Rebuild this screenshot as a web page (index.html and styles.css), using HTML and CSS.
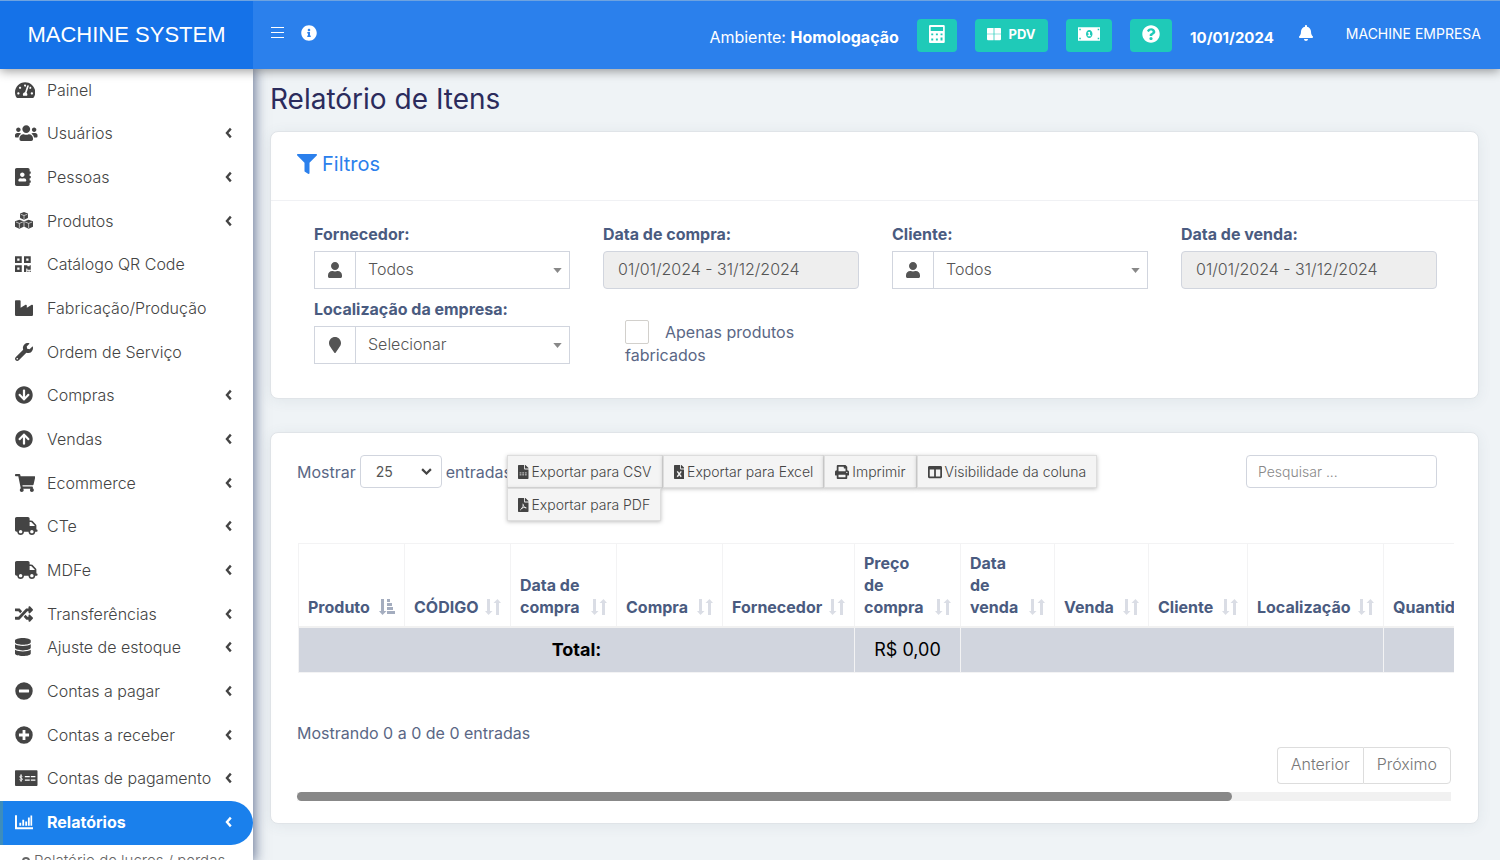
FILE: index.html
```html
<!DOCTYPE html>
<html lang="pt-BR">
<head>
<meta charset="utf-8">
<meta name="viewport" content="width=device-width, initial-scale=1">
<title>Relatório de Itens</title>
<link rel="stylesheet" href="styles.css">
</head>
<body>
<svg class="sprite" aria-hidden="true">
  <defs>
    <path id="i-gauge" d="M288 32C128.94 32 0 160.94 0 320c0 52.8 14.25 102.26 39.06 144.8 5.61 9.62 16.3 15.2 27.44 15.2h443c11.14 0 21.83-5.58 27.44-15.2C561.75 422.26 576 372.8 576 320c0-159.06-128.94-288-288-288zm0 64c14.71 0 26.58 10.13 30.32 23.65-1.11 2.26-2.64 4.23-3.45 6.67l-9.22 27.67c-5.13 3.49-10.97 6.01-17.64 6.01-17.67 0-32-14.33-32-32S270.33 96 288 96zM96 384c-17.67 0-32-14.33-32-32s14.33-32 32-32 32 14.33 32 32-14.33 32-32 32zm48-160c-17.67 0-32-14.33-32-32s14.33-32 32-32 32 14.33 32 32-14.33 32-32 32zm246.77-72.41l-61.33 184C343.13 347.33 352 364.54 352 384c0 11.72-3.38 22.55-8.88 32H232.88c-5.5-9.45-8.88-20.28-8.88-32 0-33.94 26.5-61.43 59.9-63.59l61.34-184.01c4.17-12.56 17.73-19.45 30.36-15.17 12.57 4.19 19.35 17.79 15.17 30.36zm14.66 57.2l15.52-46.55c3.47-1.29 7.13-2.23 11.05-2.23 17.67 0 32 14.33 32 32s-14.33 32-32 32c-11.38-.01-21.25-6.1-26.57-15.22zM480 384c-17.67 0-32-14.33-32-32s14.33-32 32-32 32 14.33 32 32-14.33 32-32 32z"/>
    <path id="i-users" d="M96 224c35.3 0 64-28.7 64-64s-28.7-64-64-64-64 28.7-64 64 28.7 64 64 64zm448 0c35.3 0 64-28.7 64-64s-28.7-64-64-64-64 28.7-64 64 28.7 64 64 64zm32 32h-64c-17.6 0-33.5 7.1-45.1 18.6 40.3 22.1 68.9 62 75.1 109.4h66c17.7 0 32-14.3 32-32v-32c0-35.3-28.7-64-64-64zm-256 0c61.9 0 112-50.1 112-112S381.9 32 320 32 208 82.1 208 144s50.1 112 112 112zm76.8 32h-8.3c-20.8 10-43.9 16-68.5 16s-47.6-6-68.5-16h-8.3C179.6 288 128 339.6 128 403.2V432c0 26.5 21.5 48 48 48h288c26.5 0 48-21.5 48-48v-28.8c0-63.6-51.6-115.2-115.2-115.2zm-223.7-13.4C161.5 263.1 145.6 256 128 256H64c-35.3 0-64 28.7-64 64v32c0 17.7 14.3 32 32 32h65.9c6.3-47.4 34.9-87.3 75.2-109.4z"/>
    <path id="i-book" d="M436 160c6.6 0 12-5.4 12-12v-40c0-6.6-5.4-12-12-12h-20V48c0-26.5-21.5-48-48-48H48C21.5 0 0 21.5 0 48v416c0 26.5 21.5 48 48 48h320c26.5 0 48-21.5 48-48v-48h20c6.6 0 12-5.4 12-12v-40c0-6.6-5.4-12-12-12h-20v-64h20c6.6 0 12-5.4 12-12v-40c0-6.6-5.4-12-12-12h-20v-64h20zm-228-32c35.3 0 64 28.7 64 64s-28.7 64-64 64-64-28.7-64-64 28.7-64 64-64zm112 236.8c0 10.6-10 19.2-22.4 19.2H118.4C106 384 96 375.4 96 364.8v-19.2c0-31.8 30.1-57.6 67.2-57.6h5c12.3 5.1 25.7 8 39.8 8s27.6-2.9 39.8-8h5c37.1 0 67.2 25.8 67.2 57.6v19.2z"/>
    <g id="i-cubes">
      <path d="M256 0l112 44v130l-112 48-112-48V44zM124 218l122 48v152l-122 60L0 418V266zM388 218l124 48v152l-124 60-122-60V266z"/>
      <path d="M164 66l92 34 92-34M256 100v100M24 284l100 40 100-40M124 324v130M288 284l100 40 100-40M388 324v130" fill="none" stroke="#fff" stroke-width="18"/>
    </g>
    <path id="i-qr" d="M0 224h192V32H0v192zM64 96h64v64H64V96zm192-64v192h192V32H256zm128 128h-64V96h64v64zM0 480h192V288H0v192zm64-128h64v64H64v-64zm352-64h32v128h-96v-32h-32v96h-64V288h96v32h64v-32zm0 160h32v32h-32v-32zm-64 0h32v32h-32v-32z"/>
    <path id="i-industry" d="M475.115 163.781L336 252.309v-68.28c0-18.916-20.931-30.399-36.885-20.248L160 252.309V56c0-13.255-10.745-24-24-24H24C10.745 32 0 42.745 0 56v400c0 13.255 10.745 24 24 24h464c13.255 0 24-10.745 24-24V184.029c0-18.917-20.931-30.399-36.885-20.248z"/>
    <path id="i-wrench" d="M507.73 109.1c-2.24-9.03-13.54-12.09-20.12-5.51l-74.36 74.36-67.88-11.31-11.31-67.88 74.36-74.36c6.62-6.62 3.43-17.9-5.66-20.16-47.38-11.74-99.55.91-136.58 37.93-39.64 39.64-50.55 97.1-34.05 147.2L18.74 402.76c-24.99 24.99-24.99 65.51 0 90.5 24.99 24.99 65.51 24.99 90.5 0l213.21-213.21c50.12 16.71 107.47 5.68 147.37-34.22 37.07-37.07 49.7-89.32 37.91-136.73zM64 472c-13.25 0-24-10.75-24-24 0-13.26 10.75-24 24-24s24 10.74 24 24c0 13.25-10.75 24-24 24z"/>
    <path id="i-down" d="M504 256c0 137-111 248-248 248S8 393 8 256 119 8 256 8s248 111 248 248zm-143.6-28.9L288 302.6V120c0-13.3-10.7-24-24-24h-16c-13.3 0-24 10.7-24 24v182.6l-72.4-75.5c-9.3-9.7-24.8-9.9-34.3-.4l-10.9 11c-9.4 9.4-9.4 24.6 0 33.9L239 404.3c9.4 9.4 24.6 9.4 33.9 0l132.7-132.7c9.4-9.4 9.4-24.6 0-33.9l-10.9-11c-9.5-9.5-25-9.3-34.3.4z"/>
    <path id="i-cart" d="M528.12 301.319l47.273-208C578.806 78.301 567.391 64 551.99 64H159.208l-9.166-44.81C147.758 8.021 137.93 0 126.529 0H24C10.745 0 0 10.745 0 24v16c0 13.255 10.745 24 24 24h69.883l70.248 343.435C147.325 417.1 136 435.222 136 456c0 30.928 25.072 56 56 56s56-25.072 56-56c0-15.674-6.447-29.835-16.824-40h209.647C430.447 426.165 424 440.326 424 456c0 30.928 25.072 56 56 56s56-25.072 56-56c0-22.172-12.888-41.332-31.579-50.405l5.517-24.276c3.413-15.018-8.002-29.319-23.403-29.319H218.117l-6.545-32h293.145c11.206 0 20.92-7.754 23.403-18.681z"/>
    <path id="i-truck" d="M624 352h-16V243.9c0-12.7-5.1-24.9-14.1-33.9L494 110.1c-9-9-21.2-14.1-33.9-14.1H416V48c0-26.5-21.5-48-48-48H48C21.5 0 0 21.5 0 48v320c0 26.5 21.5 48 48 48h16c0 53 43 96 96 96s96-43 96-96h128c0 53 43 96 96 96s96-43 96-96h48c8.8 0 16-7.2 16-16v-32c0-8.8-7.2-16-16-16zM160 464c-26.5 0-48-21.5-48-48s21.5-48 48-48 48 21.5 48 48-21.5 48-48 48zm320 0c-26.5 0-48-21.5-48-48s21.5-48 48-48 48 21.5 48 48-21.5 48-48 48zm80-208H416V144h44.1l99.9 99.9V256z"/>
    <path id="i-random" d="M504.971 359.029c9.373 9.373 9.373 24.569 0 33.941l-80 79.984c-15.01 15.01-40.971 4.49-40.971-16.971V416h-58.785a12.004 12.004 0 0 1-8.773-3.812l-70.556-75.596 53.333-57.143L352 336h32v-39.981c0-21.438 25.943-31.998 40.971-16.971l80 79.981zM12 176h84l52.781 56.551 53.333-57.143-70.556-75.596A11.999 11.999 0 0 0 122.785 96H12c-6.627 0-12 5.373-12 12v56c0 6.627 5.373 12 12 12zm372 0v39.984c0 21.46 25.961 31.98 40.971 16.971l80-79.984c9.373-9.373 9.373-24.569 0-33.941l-80-79.981C409.943 24.021 384 34.582 384 56.019V96h-58.785a12.004 12.004 0 0 0-8.773 3.812L96 336H12c-6.627 0-12 5.373-12 12v56c0 6.627 5.373 12 12 12h110.785c3.326 0 6.503-1.381 8.773-3.812L352 176h32z"/>
    <path id="i-db" d="M448 73.143v45.714C448 159.143 347.667 192 224 192S0 159.143 0 118.857V73.143C0 32.857 100.333 0 224 0s224 32.857 224 73.143zM448 176v102.857C448 319.143 347.667 352 224 352S0 319.143 0 278.857V176c48.125 33.143 136.208 48.572 224 48.572S399.874 209.143 448 176zm0 160v102.857C448 479.143 347.667 512 224 512S0 479.143 0 438.857V336c48.125 33.143 136.208 48.572 224 48.572S399.874 369.143 448 336z"/>
    <path id="i-minus" fill-rule="evenodd" d="M256 8a248 248 0 1 0 0 496 248 248 0 0 0 0-496zM124 216h264a12 12 0 0 1 12 12v56a12 12 0 0 1-12 12H124a12 12 0 0 1-12-12v-56a12 12 0 0 1 12-12z"/>
    <path id="i-plus" fill-rule="evenodd" d="M256 8a248 248 0 1 0 0 496 248 248 0 0 0 0-496zM216 112h80v104h104v80H296v104h-80V296H112v-80h104z"/>
    <g id="i-check">
      <path fill-rule="evenodd" d="M24 32h592a24 24 0 0 1 24 24v400a24 24 0 0 1-24 24H24a24 24 0 0 1-24-24V56a24 24 0 0 1 24-24zM280 200v38h140v-38zM450 200v38h130v-38zM280 296v38h140v-38zM450 296v38h130v-38z"/>
      <path d="M208 212c-14-18-72-22-72 12 0 40 74 24 74 66 0 38-60 36-80 14M172 150v214" fill="none" stroke="#fff" stroke-width="28"/>
    </g>
    <path id="i-chart" d="M0 64h56v344h456v56H0zM124 280h52v84h-52zM208 190h52v174h-52zM292 240h52v124h-52zM368 130h52v234h-52zM440 72h48v292h-48z"/>
    <path id="i-angle" d="M212 96L72 256l140 160" fill="none" stroke="currentColor" stroke-width="86"/>
    <path id="i-filter" d="M487.976 0H24.028C2.71 0-8.047 25.866 7.058 40.971L192 225.941V432c0 7.831 3.821 15.17 10.237 19.662l80 55.98C298.02 518.69 320 507.493 320 487.98V225.941l184.947-184.97C520.021 25.896 509.338 0 487.976 0z"/>
    <path id="i-user" d="M224 256c70.7 0 128-57.3 128-128S294.7 0 224 0 96 57.3 96 128s57.3 128 128 128zm89.6 32h-16.7c-22.2 10.2-46.9 16-72.9 16s-50.6-5.8-72.9-16h-16.7C60.2 288 0 348.2 0 422.4V464c0 26.5 21.5 48 48 48h352c26.5 0 48-21.5 48-48v-41.6c0-74.2-60.2-134.4-134.4-134.4z"/>
    <path id="i-pin" d="M172.268 501.67C26.97 291.031 0 269.413 0 192 0 85.961 85.961 0 192 0s192 85.961 192 192c0 77.413-26.97 99.031-172.268 309.67-9.535 13.774-29.93 13.773-39.464 0z"/>
    <path id="i-info" d="M256 8C119.043 8 8 119.083 8 256c0 136.997 111.043 248 248 248s248-111.003 248-248C504 119.083 392.957 8 256 8zm0 110c23.196 0 42 18.804 42 42s-18.804 42-42 42-42-18.804-42-42 18.804-42 42-42zm56 254c0 6.627-5.373 12-12 12h-88c-6.627 0-12-5.373-12-12v-24c0-6.627 5.373-12 12-12h12v-64h-12c-6.627 0-12-5.373-12-12v-24c0-6.627 5.373-12 12-12h64c6.627 0 12 5.373 12 12v100h12c6.627 0 12 5.373 12 12v24z"/>
    <path id="i-help" d="M504 256c0 136.997-111.043 248-248 248S8 392.997 8 256C8 119.083 119.043 8 256 8s248 111.083 248 248zM262.655 90c-54.497 0-89.255 22.957-116.549 63.758-3.536 5.286-2.353 12.415 2.715 16.258l34.699 26.31c5.205 3.947 12.621 3.008 16.665-2.122 17.864-22.658 30.113-35.797 57.303-35.797 20.429 0 45.698 13.148 45.698 32.958 0 14.976-12.363 22.667-32.534 33.976C247.128 238.528 216 254.941 216 296v4c0 6.627 5.373 12 12 12h56c6.627 0 12-5.373 12-12v-1.333c0-28.462 83.186-29.647 83.186-106.667 0-58.002-60.165-102-116.531-102zM256 338c-25.365 0-46 20.635-46 46 0 25.364 20.635 46 46 46s46-20.636 46-46c0-25.365-20.635-46-46-46z"/>
    <path id="i-bell" d="M224 512c35.32 0 63.97-28.65 63.97-64H160.03c0 35.35 28.65 64 63.97 64zm215.39-149.71c-19.32-20.76-55.47-51.99-55.47-154.29 0-77.7-54.48-139.9-127.94-155.16V32c0-17.67-14.32-32-31.98-32s-31.98 14.33-31.98 32v20.84C118.56 68.1 64.08 130.3 64.08 208c0 102.3-36.15 133.53-55.47 154.29-6 6.45-8.66 14.16-8.61 21.71.11 16.4 12.98 32 32.1 32h383.8c19.12 0 32-15.6 32.1-32 .05-7.55-2.61-15.27-8.61-21.71z"/>
    <path id="i-calc" fill-rule="evenodd" d="M32 0h384a32 32 0 0 1 32 32v448a32 32 0 0 1-32 32H32a32 32 0 0 1-32-32V32A32 32 0 0 1 32 0zM48 56v112h352V56zM64 244v48h56v-48zM196 244v48h56v-48zM328 244v48h56v-48zM64 384v56h56v-56zM196 384v56h56v-56zM328 352v88h56v-88z"/>
    <path id="i-tiles" d="M30 32h212v212H0V62a30 30 0 0 1 30-30zM270 32h212a30 30 0 0 1 30 30v182H270zM0 268h242v212H30a30 30 0 0 1-30-30zM270 268h242v182a30 30 0 0 1-30 30H270z"/>
    <path id="i-bill" fill-rule="evenodd" d="M0 64h640v384H0zM36 104v44h44v-44zM560 104v44h44v-44zM36 364v44h44v-44zM560 364v44h44v-44zM320 144c-53 0-92 50-92 112s39 112 92 112 92-50 92-112-39-112-92-112zM298 196h44v90h20v32h-84v-32h22v-50h-22v-24z"/>
    <path id="i-print" d="M448 192V77.25c0-8.49-3.37-16.62-9.37-22.63L393.37 9.37c-6-6-14.14-9.37-22.63-9.37H96C78.33 0 64 14.33 64 32v160c-35.35 0-64 28.65-64 64v112c0 8.84 7.16 16 16 16h48v96c0 17.67 14.33 32 32 32h320c17.67 0 32-14.33 32-32v-96h48c8.84 0 16-7.16 16-16V256c0-35.35-28.65-64-64-64zm-64 256H128v-96h256v96zm0-224H128V64h192v48c0 8.84 7.16 16 16 16h48v96zm48 72c-13.25 0-24-10.75-24-24 0-13.26 10.75-24 24-24s24 10.74 24 24c0 13.25-10.75 24-24 24z"/>
    <path id="i-cols" d="M464 32H48C21.49 32 0 53.49 0 80v352c0 26.51 21.49 48 48 48h416c26.51 0 48-21.49 48-48V80c0-26.51-21.49-48-48-48zM224 416H64V160h160v256zm224 0H288V160h160v256z"/>
    <path id="i-file" d="M224 136V0H24C10.7 0 0 10.7 0 24v464c0 13.3 10.7 24 24 24h336c13.3 0 24-10.7 24-24V160H248c-13.2 0-24-10.8-24-24zM384 122v6H256V0h6c6.4 0 12.5 2.5 17 7l98 98c4.5 4.5 7 10.6 7 17z"/>
    <path id="i-sort" d="M2 0h3v12h2.500L3.500 16 0 12h2zM11 16V4H8.500L12.500 0 16 4h-2v12z"/>
    <path id="i-sorted" d="M2 0h3v12h2.500L3.500 16 0 12h2zM8 0h3v3H8zM8 4h5v3H8zM8 8h6v3H8zM8 12h8v3H8z"/>
  </defs>
</svg>

<div class="app">
  <header class="topbar">
    <a class="brand" href="#">MACHINE SYSTEM</a>
    <nav class="topnav" aria-label="Barra superior">
      <button class="plain" type="button" aria-label="Menu">
        <svg class="burger" viewBox="0 0 13 12"><path d="M0 .5h13M0 5.500h13M0 10.500h13" stroke="#fff" fill="none"/></svg>
      </button>
      <button class="plain" type="button" aria-label="Informações"><svg class="icon i16" viewBox="0 0 512 512"><use href="#i-info"/></svg></button>
      <div class="tools">
        <span class="env">Ambiente: <strong>Homologação</strong></span>
        <button class="tool" type="button" aria-label="Calculadora"><svg class="icon i18" viewBox="0 0 448 512"><use href="#i-calc"/></svg></button>
        <button class="tool" type="button"><svg class="icon i14" viewBox="0 0 512 512"><use href="#i-tiles"/></svg>PDV</button>
        <button class="tool" type="button" aria-label="Caixa"><svg class="icon i18" viewBox="0 0 640 512"><use href="#i-bill"/></svg></button>
        <button class="tool" type="button" aria-label="Ajuda"><svg class="icon i18" viewBox="0 0 512 512"><use href="#i-help"/></svg></button>
        <strong class="date">10/01/2024</strong>
      </div>
      <button class="plain bell" type="button" aria-label="Notificações"><svg class="icon i16" viewBox="0 0 448 512"><use href="#i-bell"/></svg></button>
      <a class="company" href="#">MACHINE EMPRESA</a>
    </nav>
  </header>

  <aside class="sidebar">
    <ul class="menu">
      <li><a href="#"><svg class="icon i18" viewBox="0 0 576 512"><use href="#i-gauge"/></svg><span>Painel</span></a></li>
      <li><a href="#"><svg class="icon i18" viewBox="0 0 640 512"><use href="#i-users"/></svg><span>Usuários</span><svg class="icon angle" viewBox="0 0 256 512"><use href="#i-angle"/></svg></a></li>
      <li><a href="#"><svg class="icon i18" viewBox="0 0 448 512"><use href="#i-book"/></svg><span>Pessoas</span><svg class="icon angle" viewBox="0 0 256 512"><use href="#i-angle"/></svg></a></li>
      <li><a href="#"><svg class="icon i18" viewBox="0 0 512 512"><use href="#i-cubes"/></svg><span>Produtos</span><svg class="icon angle" viewBox="0 0 256 512"><use href="#i-angle"/></svg></a></li>
      <li><a href="#"><svg class="icon i18" viewBox="0 0 448 512"><use href="#i-qr"/></svg><span>Catálogo QR Code</span></a></li>
      <li><a href="#"><svg class="icon i18" viewBox="0 0 512 512"><use href="#i-industry"/></svg><span>Fabricação/Produção</span></a></li>
      <li><a href="#"><svg class="icon i18" viewBox="0 0 512 512"><use href="#i-wrench"/></svg><span>Ordem de Serviço</span></a></li>
      <li><a href="#"><svg class="icon i18" viewBox="0 0 512 512"><use href="#i-down"/></svg><span>Compras</span><svg class="icon angle" viewBox="0 0 256 512"><use href="#i-angle"/></svg></a></li>
      <li><a href="#"><svg class="icon i18" viewBox="0 0 512 512"><use href="#i-down" transform="rotate(180 256 256)"/></svg><span>Vendas</span><svg class="icon angle" viewBox="0 0 256 512"><use href="#i-angle"/></svg></a></li>
      <li><a href="#"><svg class="icon i18" viewBox="0 0 576 512"><use href="#i-cart"/></svg><span>Ecommerce</span><svg class="icon angle" viewBox="0 0 256 512"><use href="#i-angle"/></svg></a></li>
      <li><a href="#"><svg class="icon i18" viewBox="0 0 640 512"><use href="#i-truck"/></svg><span>CTe</span><svg class="icon angle" viewBox="0 0 256 512"><use href="#i-angle"/></svg></a></li>
      <li><a href="#"><svg class="icon i18" viewBox="0 0 640 512"><use href="#i-truck"/></svg><span>MDFe</span><svg class="icon angle" viewBox="0 0 256 512"><use href="#i-angle"/></svg></a></li>
      <li><a href="#"><svg class="icon i18" viewBox="0 0 512 512"><use href="#i-random"/></svg><span>Transferências</span><svg class="icon angle" viewBox="0 0 256 512"><use href="#i-angle"/></svg></a></li>
    </ul>
    <ul class="menu menu-more">
      <li><a href="#"><svg class="icon i18" viewBox="0 0 448 512"><use href="#i-db"/></svg><span>Ajuste de estoque</span><svg class="icon angle" viewBox="0 0 256 512"><use href="#i-angle"/></svg></a></li>
      <li><a href="#"><svg class="icon i18" viewBox="0 0 512 512"><use href="#i-minus"/></svg><span>Contas a pagar</span><svg class="icon angle" viewBox="0 0 256 512"><use href="#i-angle"/></svg></a></li>
      <li><a href="#"><svg class="icon i18" viewBox="0 0 512 512"><use href="#i-plus"/></svg><span>Contas a receber</span><svg class="icon angle" viewBox="0 0 256 512"><use href="#i-angle"/></svg></a></li>
      <li><a href="#"><svg class="icon i18" viewBox="0 0 640 512"><use href="#i-check"/></svg><span>Contas de pagamento</span><svg class="icon angle" viewBox="0 0 256 512"><use href="#i-angle"/></svg></a></li>
      <li><a class="active" href="#"><svg class="icon i18" viewBox="0 0 512 512"><use href="#i-chart"/></svg><span>Relatórios</span><svg class="icon angle" viewBox="0 0 256 512"><use href="#i-angle"/></svg></a></li>
    </ul>
    <a class="submenu" href="#"><svg class="ring" viewBox="0 0 8 8"><circle cx="4" cy="4" r="3" fill="none" stroke="currentColor" stroke-width="2"/></svg>Relatório de lucros / perdas</a>
  </aside>

  <main class="content">
    <h1 class="title">Relatório de Itens</h1>

    <section class="card">
      <h2 class="card-head"><svg class="icon i20" viewBox="0 0 512 512"><use href="#i-filter"/></svg>Filtros</h2>
      <form class="filters">
        <div class="field">
          <label for="fornecedor">Fornecedor:</label>
          <div class="group">
            <span class="addon"><svg class="icon i16" viewBox="0 0 448 512"><use href="#i-user"/></svg></span>
            <select id="fornecedor"><option>Todos</option></select>
            <svg class="caret" viewBox="0 0 10 6"><path d="M0 0h10L5 6z"/></svg>
          </div>
        </div>
        <div class="field">
          <label for="compra">Data de compra:</label>
          <input class="date-range" id="compra" type="text" value="01/01/2024 - 31/12/2024" readonly>
        </div>
        <div class="field">
          <label for="cliente">Cliente:</label>
          <div class="group">
            <span class="addon"><svg class="icon i16" viewBox="0 0 448 512"><use href="#i-user"/></svg></span>
            <select id="cliente"><option>Todos</option></select>
            <svg class="caret" viewBox="0 0 10 6"><path d="M0 0h10L5 6z"/></svg>
          </div>
        </div>
        <div class="field">
          <label for="venda">Data de venda:</label>
          <input class="date-range" id="venda" type="text" value="01/01/2024 - 31/12/2024" readonly>
        </div>
        <div class="field">
          <label for="local">Localização da empresa:</label>
          <div class="group">
            <span class="addon"><svg class="icon i16" viewBox="0 0 384 512"><use href="#i-pin"/></svg></span>
            <select id="local"><option>Selecionar</option></select>
            <svg class="caret" viewBox="0 0 10 6"><path d="M0 0h10L5 6z"/></svg>
          </div>
        </div>
        <label class="check"><input type="checkbox">Apenas produtos fabricados</label>
      </form>
    </section>

    <section class="card report">
      <div class="toolbar">
        <label class="length">Mostrar
          <span class="length-box"><select><option>25</option></select><svg class="chev" viewBox="0 0 10 6"><path d="M1 1l4 4 4-4" fill="none" stroke="currentColor" stroke-width="2"/></svg></span>
          entradas</label>
        <div class="exports">
          <button type="button"><svg class="icon i14" viewBox="0 0 384 512"><use href="#i-file"/><path d="M60 290h264M60 360h264" stroke="#f4f4f4" stroke-width="30" stroke-dasharray="66 30"/></svg>Exportar para CSV</button>
          <button type="button"><svg class="icon i14" viewBox="0 0 384 512"><use href="#i-file"/><path d="M120 230l144 200M264 230L120 430" stroke="#f4f4f4" stroke-width="50"/></svg>Exportar para Excel</button>
          <button type="button"><svg class="icon i14" viewBox="0 0 512 512"><use href="#i-print"/></svg>Imprimir</button>
          <button type="button"><svg class="icon i14" viewBox="0 0 512 512"><use href="#i-cols"/></svg>Visibilidade da coluna</button>
          <button type="button"><svg class="icon i14" viewBox="0 0 384 512"><use href="#i-file"/><path d="M176 210c30 90 50 150 130 160M190 250c0 80-50 150-110 190M110 390c60-40 110-50 190-40" fill="none" stroke="#f4f4f4" stroke-width="32"/></svg>Exportar para PDF</button>
        </div>
        <input class="search" type="search" placeholder="Pesquisar ..." aria-label="Pesquisar">
      </div>

      <div class="table-wrap">
        <table class="table">
          <colgroup>
            <col class="w106"><col class="w106"><col class="w106"><col class="w106"><col class="w132"><col class="w106"><col class="w94"><col class="w94"><col class="w100"><col class="w136"><col class="w132">
          </colgroup>
          <thead>
            <tr>
              <th scope="col"><span class="th">Produto <svg class="sort on" viewBox="0 0 16 16"><use href="#i-sorted"/></svg></span></th>
              <th scope="col"><span class="th">CÓDIGO <svg class="sort" viewBox="0 0 16 16"><use href="#i-sort"/></svg></span></th>
              <th scope="col"><span class="th">Data de compra <svg class="sort" viewBox="0 0 16 16"><use href="#i-sort"/></svg></span></th>
              <th scope="col"><span class="th">Compra <svg class="sort" viewBox="0 0 16 16"><use href="#i-sort"/></svg></span></th>
              <th scope="col"><span class="th">Fornecedor <svg class="sort" viewBox="0 0 16 16"><use href="#i-sort"/></svg></span></th>
              <th scope="col"><span class="th">Preço<br>de<br>compra <svg class="sort" viewBox="0 0 16 16"><use href="#i-sort"/></svg></span></th>
              <th scope="col"><span class="th">Data<br>de<br>venda <svg class="sort" viewBox="0 0 16 16"><use href="#i-sort"/></svg></span></th>
              <th scope="col"><span class="th">Venda <svg class="sort" viewBox="0 0 16 16"><use href="#i-sort"/></svg></span></th>
              <th scope="col"><span class="th">Cliente <svg class="sort" viewBox="0 0 16 16"><use href="#i-sort"/></svg></span></th>
              <th scope="col"><span class="th">Localização <svg class="sort" viewBox="0 0 16 16"><use href="#i-sort"/></svg></span></th>
              <th scope="col"><span class="th">Quantidade <svg class="sort" viewBox="0 0 16 16"><use href="#i-sort"/></svg></span></th>
            </tr>
          </thead>
          <tfoot>
            <tr><td colspan="5"><strong>Total:</strong></td><td>R$ 0,00</td><td colspan="4"></td><td></td></tr>
          </tfoot>
        </table>
      </div>

      <p class="info">Mostrando 0 a 0 de 0 entradas</p>
      <div class="pager">
        <button type="button">Anterior</button>
        <button type="button">Próximo</button>
      </div>
      <div class="scroll"><div class="thumb"></div></div>
    </section>
  </main>
</div>
</body>
</html>
```
FILE: styles.css
```css
* { box-sizing: border-box; }

body {
  margin: 0;
  font-family: Inter, "Open Sans", sans-serif;
  font-size: 16px;
  color: #5a6785;
  background: #eff3f6;
}

button, input, select { font: inherit; color: inherit; margin: 0; }
button { cursor: pointer; }
a { color: inherit; text-decoration: none; }

.sprite { position: absolute; width: 0; height: 0; }
.icon { fill: currentColor; width: auto; flex: none; display: block; }
.i14 { height: 14px; }
.i16 { height: 16px; }
.i18 { height: 18px; }
.i20 { height: 20px; }

.app {
  display: grid;
  grid-template-columns: 253px minmax(0, 1fr);
  grid-template-rows: auto minmax(0, 1fr);
  height: 100vh;
  overflow: hidden;
}

/* top bar */
.topbar {
  grid-column: 1 / -1;
  display: flex;
  height: 69px;
  color: #fff;
  background: #2b80ec;
  border-top: 1px solid #6ea3e0;
  box-shadow: 0 2px 10px rgba(0, 0, 0, .4);
  z-index: 3;
}
.brand {
  width: 253px;
  display: flex;
  align-items: center;
  justify-content: center;
  background: #1572e8;
  font-family: "Liberation Sans", Arial, sans-serif;
  font-size: 22px;
}
.topnav { flex: 1; display: flex; align-items: center; padding: 0 19px 4px 18px; gap: 17px; }
.plain { display: block; padding: 0; border: 0; background: none; color: #fff; }
.burger { display: block; width: 13px; height: 12px; }
.tools { margin-left: auto; display: flex; align-items: center; gap: 18px; padding-top: 4px; }
.env, .date { padding-top: 4px; }
.date { font-size: 15px; }
.tool {
  display: flex;
  align-items: center;
  gap: 8px;
  height: 33px;
  padding: 0 12px 2px;
  border: 0;
  border-radius: 4px;
  background: #1fcab8;
  color: #fff;
  font-size: 13px;
  font-weight: 700;
}
.bell { margin: 0 16px 0 8px; }
.company { font-size: 14px; }

/* sidebar */
.sidebar { background: #fff; color: #444; overflow: hidden; box-shadow: 0 0 12px 2px rgba(50, 68, 110, .7); z-index: 2; }
.menu { list-style: none; margin: 0; padding: 0; font-weight: 300; }
.menu a { display: grid; grid-template-columns: 32px 1fr auto; align-items: center; height: 44px; padding: 0 21px 2px 15px; white-space: nowrap; }
.menu li:nth-child(3n+1) a { height: 43px; }
.menu-more { margin-top: -10px; }
.menu-more li:nth-child(3n+1) a { height: 44px; }
.menu-more li:nth-child(3n) a { height: 43px; }
.angle { height: 14px; }
.menu a.active {
  padding-left: 12px;
  border-left: 3px solid #3c8dbc;
  border-radius: 0 22px 22px 0;
  background: #1a80ec;
  color: #fff;
  font-weight: 700;
}
.submenu { display: flex; align-items: center; gap: 4px; padding: 6px 0 0 22px; font-size: 15px; font-weight: 300; color: #666; white-space: nowrap; }
.ring { width: 8px; height: 8px; }

/* content */
.content { overflow: hidden; padding: 12px 21px 0 17px; }
.title { margin: 0 0 13px; font-size: 28px; line-height: 37px; font-weight: 400; color: #2b2b5c; }
.card {
  background: #fff;
  border: 1px solid #e0e4e8;
  border-radius: 8px;
  box-shadow: 0 2px 14px rgba(69, 90, 100, .08);
}
.card-head {
  display: flex;
  align-items: center;
  gap: 5px;
  margin: 0;
  padding: 18px 26px 22px;
  border-bottom: 1px solid #f0f1f4;
  font-size: 20px;
  line-height: 28px;
  font-weight: 400;
  color: #2b80ec;
}
.filters { display: grid; grid-template-columns: repeat(4, minmax(0, 1fr)); gap: 9px 33px; padding: 22px 41px 31px 43px; }
.field label { display: block; line-height: 22px; margin-bottom: 6px; font-weight: 700; color: #4a5b80; }
.group {
  display: grid;
  grid-template-columns: 41px 1fr 24px;
  align-items: center;
  height: 38px;
  border: 1px solid #d1d5de;
  color: #555;
}
.addon { display: flex; align-items: center; justify-content: center; height: 36px; border-right: 1px solid #d1d5de; }
.group select { grid-area: 1 / 2 / 2 / 4; height: 36px; padding: 0 12px 3px; border: 0; background: none; appearance: none; font-weight: 300; }
.caret { grid-area: 1 / 3; width: 9px; height: 5px; fill: #888; pointer-events: none; justify-self: center; }
.date-range { display: block; width: 100%; height: 38px; padding: 0 14px 3px; border: 1px solid #d1d5de; border-radius: 4px; background: #eee; color: #555; font-weight: 300; }
.check { padding: 22px 33px 0 22px; line-height: 23px; }
.check input {
  appearance: none;
  width: 24px;
  height: 24px;
  margin: 0 16px 0 0;
  border: 1px solid #d2d0cc;
  border-radius: 2px;
  background: #fff;
  vertical-align: -6px;
}

/* report */
.report { margin-top: 33px; padding: 22px 27px 22px 26px; }
.toolbar { display: flex; align-items: flex-start; padding-right: 14px; }
.length { display: flex; align-items: center; gap: 4px; width: 210px; height: 33px; overflow: hidden; white-space: nowrap; flex: none; }
.length-box { display: grid; grid-template-columns: 1fr 20px; align-items: center; width: 82px; height: 33px; border: 1px solid #d1d5de; border-radius: 4px; flex: none; color: #555; }
.length-box select { grid-area: 1 / 1 / 2 / 3; height: 31px; padding: 0 15px; border: 0; background: none; appearance: none; font-size: 14px; }
.chev { grid-area: 1 / 2; width: 11px; pointer-events: none; color: #444; }
.exports { flex: 1; display: flex; flex-wrap: wrap; padding-right: 40px; }
.exports button {
  display: flex;
  align-items: center;
  gap: 3px;
  height: 33px;
  padding: 0 10px;
  border: 1px solid #ddd;
  background: #f4f4f4;
  color: #444;
  font-size: 14px;
  font-weight: 300;
  box-shadow: 0 1px 4px rgba(0, 0, 0, .25);
}
.search { width: 191px; height: 33px; padding: 0 11px; border: 1px solid #d1d5de; border-radius: 4px; background: #fff; font-size: 14px; font-weight: 300; flex: none; }
.search::placeholder { color: #888; opacity: 1; }

.table-wrap { margin: 22px -3px 0 1px; overflow: hidden; }
.table { table-layout: fixed; width: 1218px; border-collapse: collapse; }
.w94 { width: 94px; }
.w100 { width: 99px; }
.w106 { width: 106px; }
.w132 { width: 132px; }
.w136 { width: 136px; }
.table th {
  padding: 8px 9px;
  border: 1px solid #f3f3f4;
  border-bottom: 2px solid #f1f1f1;
  vertical-align: bottom;
  text-align: left;
  line-height: 22px;
  font-weight: 700;
  color: #4a5b80;
}
.th { display: flex; align-items: flex-end; justify-content: space-between; }
.sort { flex: none; width: 16px; height: 16px; margin-bottom: 3px; fill: #dadde5; }
.sort.on { fill: #a4adbf; }
.table td { height: 45px; padding: 0; border: 1px solid #f3f3f4; background: #d1d5de; text-align: center; font-size: 18px; color: #000; }

.info { margin: 49px 0 3px; line-height: 22px; }
.pager { display: flex; justify-content: flex-end; }
.pager button { height: 37px; padding: 0 13px 2px; border: 1px solid #ddd; background: #fff; color: #777; font-weight: 300; }
.pager button:first-child { border-radius: 4px 0 0 4px; border-right: 0; }
.pager button:last-child { border-radius: 0 4px 4px 0; }
.scroll { margin-top: 8px; height: 9px; background: #f1f1f1; }
.thumb { width: 81%; height: 9px; border-radius: 5px; background: #888; }
```
